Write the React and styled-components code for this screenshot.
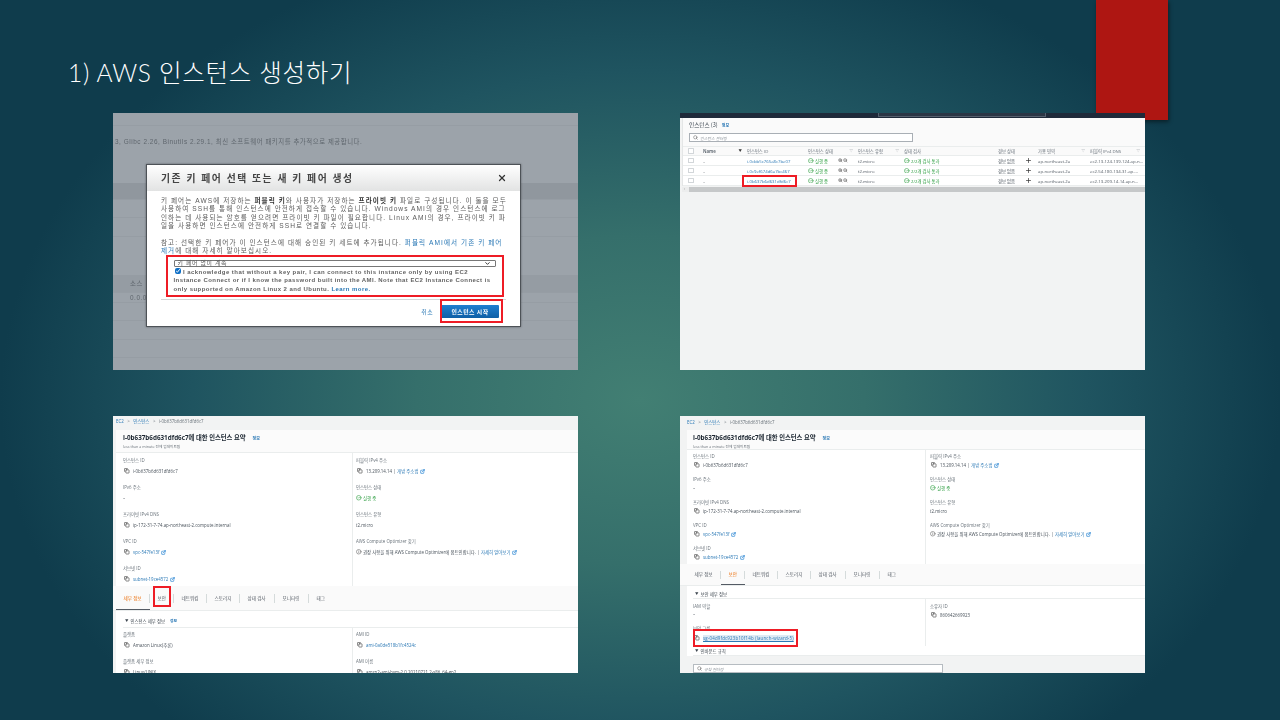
import React from 'react';
import styled, { createGlobalStyle } from 'styled-components';
import { Copy, ExternalLink, CircleCheck, Search, X, ChevronDown, Info, Plus, ZoomIn, ZoomOut } from 'lucide-react';

const GlobalStyle = createGlobalStyle`
  html, body { margin: 0; padding: 0; }
  body {
    width: 1280px;
    height: 720px;
    overflow: hidden;
    font-family: "Noto Sans CJK KR", sans-serif;
  }
`;

const CONSOLE_FONT = `"Open Sans", "Noto Sans CJK KR", sans-serif`;
const MODAL_FONT = `"Liberation Sans", "Noto Sans CJK KR", sans-serif`;
const RED = '#ee1c25';
const LINK = '#2a78b5';

// Slide frame
const Slide = styled.div`
  position: relative;
  width: 1280px;
  height: 720px;
  box-sizing: border-box;
  padding: 54px 0 0 68px;
  overflow: hidden;
  background: radial-gradient(ellipse 640px 470px at 640px 400px, #427f73 0%, #356f6b 35%, #1f5460 70%, #0f3c4c 100%);
`;

const Ribbon = styled.div`
  position: absolute;
  top: 0;
  left: 1096px;
  width: 72px;
  height: 120px;
  background: #ae1612;
  box-shadow: 1px 2px 4px rgba(0, 0, 0, 0.45);
`;

const Title = styled.h1`
  position: relative;
  margin: 0;
  height: 38px;
  line-height: 38px;
  font-family: "Lato", "Noto Sans CJK KR", sans-serif;
  font-size: 24.5px;
  font-weight: 300;
  letter-spacing: 0.7px;
  color: #ffffff;
`;

const ShotGrid = styled.div`
  position: relative;
  margin: 21px 0 0 45px;
  display: grid;
  grid-template-columns: 465px 465px;
  grid-auto-rows: 257px;
  column-gap: 102px;
  row-gap: 46px;
`;

const Shot = styled.div`
  position: relative;
  overflow: hidden;
  display: flex;
  flex-direction: column;
  background: ${(p) => p.$bg || '#f2f3f3'};
  filter: blur(0.35px);
  font-family: ${CONSOLE_FONT};
`;

// Red annotation frame drawn over the screenshot
const RedBox = styled.span`
  position: absolute;
  inset: ${(p) => p.$inset};
  border: 2px solid ${RED};
  pointer-events: none;
  z-index: 2;
`;

const Marked = styled.span`
  position: relative;
  display: inline-flex;
  align-items: center;
`;

// Shot 1 - key pair dialog over dimmed page
const DimRow = styled.div`
  height: ${(p) => p.$h}px;
  flex: none;
  box-sizing: border-box;
  padding-left: ${(p) => p.$pad || 2}px;
  line-height: ${(p) => p.$h}px;
  font-family: ${MODAL_FONT};
  font-size: 6.4px;
  letter-spacing: 0.55px;
  color: #5f666d;
  white-space: nowrap;
  background: ${(p) => p.$bg || 'transparent'};
  border-bottom: 1px solid ${(p) => p.$line || '#969da4'};
`;

const Modal = styled.div`
  position: absolute;
  left: 33px;
  top: 51px;
  width: 375px;
  height: 163px;
  box-sizing: border-box;
  background: #fff;
  border: 1px solid #4d5257;
  font-family: ${MODAL_FONT};
  box-shadow: 0 0 2px rgba(0, 0, 0, 0.4);
`;

const ModalHead = styled.div`
  height: 26px;
  box-sizing: border-box;
  padding: 0 14px;
  display: flex;
  align-items: center;
  justify-content: space-between;
  background: linear-gradient(#ffffff, #e2e3e3);
  color: #444;
  svg { width: 10px; height: 10px; stroke-width: 3; color: #333; margin-right: -1px; }
`;

const ModalTitle = styled.div`
  font-size: 9.8px;
  font-weight: 700;
  letter-spacing: 1.55px;
  white-space: nowrap;
`;

const ModalBody = styled.div`
  padding: 6px 14px 0;
  font-size: 6.6px;
  line-height: 8.3px;
  letter-spacing: 1.05px;
  color: #5a5a5a;
`;

const TextLine = styled.div`
  white-space: nowrap;
  b { color: #333; }
  a { color: ${LINK}; }
`;

const Note = styled.div`
  margin-top: 8.5px;
`;

const AckBlock = styled.div`
  position: relative;
  margin: 5px 0 0 12.5px;
  width: 322px;
`;

const FakeSelect = styled.div`
  height: 6.7px;
  box-sizing: border-box;
  padding: 0 3px;
  display: flex;
  align-items: center;
  justify-content: space-between;
  border: 1px solid #777;
  border-radius: 1px;
  font-size: 5.9px;
  letter-spacing: 0.68px;
  svg { width: 7px; height: 7px; stroke-width: 3; color: #222; margin-right: 1px; }
`;

const AckText = styled.div`
  margin-top: 1px;
  font-size: 6px;
  font-weight: 700;
  letter-spacing: 0.44px;
  color: #636363;
  white-space: nowrap;
  a { color: ${LINK}; }
`;

const AckBox = styled.input`
  width: 6px;
  height: 6px;
  margin: 0 2px 0 1.5px;
  vertical-align: -0.5px;
  accent-color: #0f6fc6;
`;

const ModalFoot = styled.div`
  margin: 6px 14px 0;
  padding-top: 5px;
  border-top: 1px solid #d5d7d8;
  display: flex;
  justify-content: flex-end;
  align-items: center;
  gap: 8px;
  padding-right: 7px;
  font-size: 5.9px;
  letter-spacing: 0.4px;
  color: ${LINK};
`;

const StartButton = styled.span`
  position: relative;
  width: 58px;
  height: 13.3px;
  display: flex;
  align-items: center;
  justify-content: center;
  background: linear-gradient(#1f7fd0, #0e5fa6);
  color: #fff;
  font-weight: 700;
  border-radius: 1px;
  white-space: nowrap;
`;

// Shot 2 - instances list
const TopBar = styled.div`
  height: 5px;
  flex: none;
  background: #1f2a3a;
  display: flex;
  justify-content: center;
`;

const TopSearch = styled.div`
  width: 166px;
  margin-left: 98px;
  height: 3px;
  border: 1px solid #55606e;
  border-top: 0;
  background: #2b3645;
`;

const ListPanel = styled.div`
  margin-left: 2px;
  background: #fff;
  border-left: 1px solid #e4e6e6;
`;

const ListHead = styled.div`
  height: 28px;
  box-sizing: border-box;
  padding: 3px 0 0 6px;
  background: #fafafa;
`;

const ListTitle = styled.div`
  font-family: "Noto Sans CJK KR", sans-serif;
  font-size: 5.6px;
  line-height: 9px;
  color: #3c4650;
  span { margin-left: 4px; color: ${LINK}; font-size: 4px; font-weight: 700; }
`;

const SearchBox = styled.div`
  width: 224px;
  height: 9px;
  margin-top: 3px;
  box-sizing: border-box;
  padding-left: 3px;
  display: flex;
  align-items: center;
  gap: 2px;
  background: #fff;
  border: 1px solid #a9afb5;
  font-size: 4px;
  font-style: italic;
  color: #8a9299;
  svg { width: 5px; height: 5px; color: #444; }
`;

const Cols = styled.div`
  display: grid;
  box-sizing: border-box;
  grid-template-columns: 15px 44px 61px 30px 20px 46px 94px 27px 13px 52px 1fr;
  padding-left: 5px;
  align-items: center;
  height: 10px;
  font-size: 4.3px;
  color: #4e5760;
  white-space: nowrap;
  background: ${(p) => (p.$head ? '#fafafa' : '#fff')};
  border-bottom: 1px solid #eaeded;
  ${(p) => p.$head && 'border-top: 1px solid #eaeded; color: #68717a;'}
`;

const HeadCell = styled.div`
  grid-column: span ${(p) => p.$span || 1};
  display: flex;
  justify-content: space-between;
  padding-right: 5px;
  font-weight: ${(p) => (p.$strong ? 700 : 400)};
  i { font-style: normal; font-size: 3.4px; color: ${(p) => (p.$strong ? '#333' : '#8a9299')}; }
`;

const Tick = styled.span`
  display: block;
  width: 3.6px;
  height: 3.6px;
  border: 0.6px solid #d2d6d9;
  border-radius: 0.6px;
  background: #fff;
`;

const Cell = styled.div`
  min-width: 0;
  overflow: hidden;
  text-overflow: ellipsis;
  color: ${(p) => p.$color || 'inherit'};
`;

const ZoomCell = styled.div`
  display: flex;
  gap: 0.5px;
  svg { width: 4.6px; height: 4.6px; color: #555; stroke-width: 2.5; }
`;

const PlusCell = styled.div`
  display: flex;
  svg { width: 7px; height: 7px; color: #333; stroke-width: 2.4; }
`;

const GreenText = styled.span`
  display: inline-flex;
  align-items: center;
  gap: 1.5px;
  color: #2a9c3e;
  svg { width: 5.5px; height: 5.5px; stroke-width: 2.5; flex: none; }
`;

const ScrollBar = styled.div`
  flex: none;
  margin: 1px 0 0 2px;
  height: 5px;
  display: flex;
  background: #c6c8c9;
  span { width: 7px; background: #eceded; font-size: 3px; line-height: 5px; padding-left: 2px; box-sizing: border-box; color: #666; }
`;

// Shots 3 and 4 - instance summary
const Crumbs = styled.div`
  flex: none;
  height: 14px;
  box-sizing: border-box;
  padding: ${(p) => p.$top}px 0 0 ${(p) => p.$left}px;
  display: flex;
  gap: 3.5px;
  font-size: 4.4px;
  line-height: 8px;
  color: ${LINK};
  white-space: nowrap;
  span { color: #69727a; }
`;

const SummaryCard = styled.div`
  flex: none;
  margin-left: ${(p) => p.$gutter}px;
  background: #fff;
  display: flex;
  flex-direction: column;
`;

const SummaryHead = styled.div`
  height: ${(p) => p.$h}px;
  box-sizing: border-box;
  padding: 3px 0 0 ${(p) => p.$pad}px;
  background: #fbfbfb;
  border-bottom: 1px solid #eaeded;
`;

const SummaryTitle = styled.div`
  font-size: 6.3px;
  line-height: 10px;
  font-weight: 700;
  color: #1b2530;
  white-space: nowrap;
  span { margin-left: 7px; font-size: 4px; color: ${LINK}; font-weight: 700; }
`;

const SummarySub = styled.div`
  font-size: 3.7px;
  line-height: 5px;
  color: #687078;
  white-space: nowrap;
`;

const TwoCols = styled.div`
  display: grid;
  grid-template-columns: ${(p) => p.$left}px 1fr;
  height: ${(p) => p.$h}px;
  box-sizing: border-box;
`;

const FieldCol = styled.div`
  padding: ${(p) => p.$top}px 0 0 ${(p) => p.$pad}px;
  border-left: ${(p) => (p.$rule ? '1px solid #eaeded' : '0')};
`;

const FieldBox = styled.div`
  height: ${(p) => p.$pitch}px;
`;

const FieldLabel = styled.div`
  font-size: 4.4px;
  line-height: 8px;
  color: #69727a;
  white-space: nowrap;
`;

const FieldValue = styled.div`
  display: flex;
  align-items: center;
  gap: 1.5px;
  height: 8px;
  margin-top: ${(p) => p.$gap}px;
  font-size: 4.4px;
  color: #49525b;
  white-space: nowrap;
  a { color: ${LINK}; }
`;

const CopyIcon = styled(Copy)`
  width: 5.5px;
  height: 5.5px;
  margin: 0 2px 0 1px;
  color: #333;
  stroke-width: 2.5;
  flex: none;
`;

const LinkIcon = styled(ExternalLink)`
  width: 5px;
  height: 5px;
  color: #1f7fd0;
  stroke-width: 3;
  flex: none;
`;

const InfoIcon = styled(Info)`
  width: 5.5px;
  height: 5.5px;
  color: #444;
  flex: none;
`;

const SecurityLink = styled.a`
  letter-spacing: 0.2px;
  text-decoration: underline;
  background: #dfeaf4;
`;

const TabBar = styled.div`
  flex: none;
  height: ${(p) => p.$h}px;
  box-sizing: border-box;
  padding-left: ${(p) => p.$pad}px;
  display: flex;
  background: #fafafa;
  border-bottom: 1px solid #eaeded;
`;

const Tab = styled.div`
  position: relative;
  box-sizing: border-box;
  width: ${(p) => p.$w}px;
  padding-left: 7.5px;
  display: flex;
  align-items: center;
  font-size: 4.6px;
  color: ${(p) => (p.$active ? '#ec7211' : '#545b64')};
  white-space: nowrap;
  border-bottom: 1px solid ${(p) => (p.$active ? '#545b64' : 'transparent')};
  &:not(:last-child)::after {
    content: '';
    position: absolute;
    right: 0;
    top: 33%;
    height: 40%;
    border-right: 1px solid #d5dbdb;
  }
`;

const SectionHead = styled.div`
  height: ${(p) => p.$h}px;
  margin-left: ${(p) => p.$pad}px;
  box-sizing: border-box;
  padding-left: 2px;
  display: flex;
  align-items: flex-end;
  padding-bottom: ${(p) => p.$bottom}px;
  gap: 2px;
  font-size: 4.4px;
  line-height: 8px;
  color: #3d464f;
  white-space: nowrap;
  border-bottom: 1px solid #eaeded;
  i { font-style: normal; font-size: 3.5px; }
  span { color: ${LINK}; font-weight: 700; font-size: 3.8px; margin-left: 3px; }
`;

const RuleSearch = styled(SearchBox)`
  width: 250px;
  margin: 8px 0 0 13px;
  border-color: #b6bcc1;
`;

const Field = ({ label, gap, pitch, children }) => (
  <FieldBox $pitch={pitch}>
    <FieldLabel>{label}</FieldLabel>
    <FieldValue $gap={gap}>{children}</FieldValue>
  </FieldBox>
);

const instances = [
  { id: 'i-0cbb5c765a8c7be07', dns: 'ec2-13-124-139-124.ap-n...' },
  { id: 'i-0c9ef674d6a7bc467', dns: 'ec2-54-180-134-31.ap-...' },
  { id: 'i-0b637b6d631dfd6c7', dns: 'ec2-13-209-14-14.ap-n...', marked: true },
];

const tabNames = ['세부 정보', '보안', '네트워킹', '스토리지', '상태 검사', '모니터링', '태그'];
const tabWidths = [34, 24, 33, 33, 35, 34, 30];

const INSTANCE_ID = 'i-0b637b6d631dfd6c7';

// Upper half shared by both summary screenshots
const SummaryFields = ({ leftW, h, pad, top, gap, pitch, rightPad }) => (
  <TwoCols $left={leftW} $h={h}>
    <FieldCol $pad={pad} $top={top}>
      <Field label="인스턴스 ID" gap={gap} pitch={pitch}><CopyIcon />{INSTANCE_ID}</Field>
      <Field label="IPv6 주소" gap={gap} pitch={pitch}>–</Field>
      <Field label="프라이빗 IPv4 DNS" gap={gap} pitch={pitch}><CopyIcon />ip-172-31-7-74.ap-northeast-2.compute.internal</Field>
      <Field label="VPC ID" gap={gap} pitch={pitch}><CopyIcon /><a>vpc-547fe13f</a><LinkIcon /></Field>
      <Field label="서브넷 ID" gap={gap} pitch={pitch}><CopyIcon /><a>subnet-19ce4572</a><LinkIcon /></Field>
    </FieldCol>
    <FieldCol $pad={rightPad} $top={top} $rule>
      <Field label="퍼블릭 IPv4 주소" gap={gap} pitch={pitch}><CopyIcon />13.209.14.14 | <a>개방 주소법</a><LinkIcon /></Field>
      <Field label="인스턴스 상태" gap={gap} pitch={pitch}><GreenText><CircleCheck />실행 중</GreenText></Field>
      <Field label="인스턴스 유형" gap={gap} pitch={pitch}>t2.micro</Field>
      <Field label="AWS Compute Optimizer 찾기" gap={gap} pitch={pitch}>
        <InfoIcon />권장 사항을 위해 AWS Compute Optimizer에 옵트인합니다. | <a>자세히 알아보기</a><LinkIcon />
      </Field>
    </FieldCol>
  </TwoCols>
);

const Tabs = ({ active, h, pad, marked }) => (
  <TabBar $h={h} $pad={pad}>
    {tabNames.map((name, i) => (
      <Tab key={name} $w={tabWidths[i]} $active={i === active}>
        {name}
        {i === marked && <RedBox $inset="0 3px 2px 3px" />}
      </Tab>
    ))}
  </TabBar>
);

const KeyPairShot = () => (
  <Shot $bg="#9ca3aa">
    <DimRow $h={13} />
    <DimRow $h={32} $line="transparent">3, Glibc 2.26, Binutils 2.29.1, 최신 소프트웨어 패키지를 추가적으로 제공합니다.</DimRow>
    <DimRow $h={25} $line="transparent" />
    <DimRow $h={17} $bg="#90979e" />
    <DimRow $h={18} />
    <DimRow $h={19} />
    <DimRow $h={38} $line="transparent" />
    <DimRow $h={18} $bg="#959ca3" $pad={17}>소스</DimRow>
    <DimRow $h={10} $pad={17}>0.0.0</DimRow>
    <DimRow $h={18} />
    <DimRow $h={19} />
    <DimRow $h={18} />

    <Modal>
      <ModalHead>
        <ModalTitle>기존 키 페어 선택 또는 새 키 페어 생성</ModalTitle>
        <X />
      </ModalHead>
      <ModalBody>
        <TextLine>키 페어는 AWS에 저장하는 <b>퍼블릭 키</b>와 사용자가 저장하는 <b>프라이빗 키</b> 파일로 구성됩니다. 이 둘을 모두</TextLine>
        <TextLine>사용하여 SSH를 통해 인스턴스에 안전하게 접속할 수 있습니다. Windows AMI의 경우 인스턴스에 로그</TextLine>
        <TextLine>인하는 데 사용되는 암호를 얻으려면 프라이빗 키 파일이 필요합니다. Linux AMI의 경우, 프라이빗 키 파</TextLine>
        <TextLine>일을 사용하면 인스턴스에 안전하게 SSH로 연결할 수 있습니다.</TextLine>
        <Note>
          <TextLine>참고: 선택한 키 페어가 이 인스턴스에 대해 승인된 키 세트에 추가됩니다. <a>퍼블릭 AMI에서 기존 키 페어</a></TextLine>
          <TextLine><a>제거</a>에 대해 자세히 알아보십시오.</TextLine>
        </Note>
        <AckBlock>
          <RedBox $inset="-5px -8px -4px -8px" />
          <FakeSelect>키 페어 없이 계속<ChevronDown /></FakeSelect>
          <AckText>
            <div><AckBox type="checkbox" checked readOnly />I acknowledge that without a key pair, I can connect to this instance only by using EC2</div>
            <div>Instance Connect or if I know the password built into the AMI. Note that EC2 Instance Connect is</div>
            <div>only supported on Amazon Linux 2 and Ubuntu. <a>Learn more.</a></div>
          </AckText>
        </AckBlock>
      </ModalBody>
      <ModalFoot>
        <span>취소</span>
        <StartButton>
          인스턴스 시작
          <RedBox $inset="-6px -4px -5px -1px" />
        </StartButton>
      </ModalFoot>
    </Modal>
  </Shot>
);

const InstanceListShot = () => (
  <Shot>
    <TopBar><TopSearch /></TopBar>
    <ListPanel>
      <ListHead>
        <ListTitle>인스턴스 (3)<span>정보</span></ListTitle>
        <SearchBox><Search />인스턴스 필터링</SearchBox>
      </ListHead>
      <Cols $head>
        <Tick />
        <HeadCell $strong>Name<i>▼</i></HeadCell>
        <HeadCell>인스턴스 ID</HeadCell>
        <HeadCell $span={2}>인스턴스 상태<i>▽</i></HeadCell>
        <HeadCell>인스턴스 유형<i>▽</i></HeadCell>
        <HeadCell>상태 검사</HeadCell>
        <HeadCell $span={2}>경보 상태</HeadCell>
        <HeadCell>가용 영역<i>▽</i></HeadCell>
        <HeadCell>퍼블릭 IPv4 DNS<i>▽</i></HeadCell>
      </Cols>
      {instances.map((row) => (
        <Cols key={row.id}>
          <Tick />
          <Cell>–</Cell>
          <div>
            {row.marked ? (
              <Marked>
                <Cell $color={LINK}>{row.id}</Cell>
                <RedBox $inset="-3px -6px -3px -5px" />
              </Marked>
            ) : (
              <Cell $color={LINK}>{row.id}</Cell>
            )}
          </div>
          <GreenText><CircleCheck />실행 중</GreenText>
          <ZoomCell><ZoomIn /><ZoomOut /></ZoomCell>
          <Cell>t2.micro</Cell>
          <GreenText><CircleCheck />2/2개 검사 통과</GreenText>
          <Cell>경보 없음</Cell>
          <PlusCell><Plus /></PlusCell>
          <Cell>ap-northeast-2a</Cell>
          <Cell>{row.dns}</Cell>
        </Cols>
      ))}
    </ListPanel>
    <ScrollBar><span>‹</span></ScrollBar>
  </Shot>
);

const DetailsShot = () => (
  <Shot>
    <Crumbs $top={1} $left={3}>EC2 <span>&gt;</span> 인스턴스 <span>&gt;</span> <span>{INSTANCE_ID}</span></Crumbs>
    <SummaryCard $gutter={3}>
      <SummaryHead $h={23} $pad={7}>
        <SummaryTitle>{INSTANCE_ID}에 대한 인스턴스 요약<span>정보</span></SummaryTitle>
        <SummarySub>less than a minute 전에 업데이트됨</SummarySub>
      </SummaryHead>
      <SummaryFields leftW={236} h={133} pad={7} top={3} gap={3} pitch={27} rightPad={3} />
    </SummaryCard>
    <Tabs active={0} h={25} pad={3} marked={1} />
    <SummaryCard $gutter={3}>
      <SectionHead $h={17} $pad={7} $bottom={2}><i>▼</i>인스턴스 세부 정보<span>정보</span></SectionHead>
      <TwoCols $left={236} $h={60}>
        <FieldCol $pad={7} $top={2}>
          <Field label="플랫폼" gap={3} pitch={27}><CopyIcon />Amazon Linux(추론)</Field>
          <Field label="플랫폼 세부 정보" gap={3} pitch={27}><CopyIcon />Linux/UNIX</Field>
        </FieldCol>
        <FieldCol $pad={3} $top={2} $rule>
          <Field label="AMI ID" gap={3} pitch={27}><CopyIcon /><a>ami-0a0de518b1fc4524c</a></Field>
          <Field label="AMI 이름" gap={3} pitch={27}><CopyIcon />amzn2-ami-hvm-2.0.20210721.2-x86_64-gp2</Field>
        </FieldCol>
      </TwoCols>
    </SummaryCard>
  </Shot>
);

const SecurityShot = () => (
  <Shot>
    <Crumbs $top={2} $left={7}>EC2 <span>&gt;</span> 인스턴스 <span>&gt;</span> <span>{INSTANCE_ID}</span></Crumbs>
    <SummaryCard $gutter={7}>
      <SummaryHead $h={20} $pad={6}>
        <SummaryTitle>{INSTANCE_ID}에 대한 인스턴스 요약<span>정보</span></SummaryTitle>
        <SummarySub>less than a minute 전에 업데이트됨</SummarySub>
      </SummaryHead>
      <SummaryFields leftW={238} h={114} pad={6} top={2} gap={1} pitch={23} rightPad={4} />
    </SummaryCard>
    <Tabs active={1} h={22} pad={7} />
    <SummaryCard $gutter={7}>
      <SectionHead $h={13} $pad={6} $bottom={0}><i>▼</i>보안 세부 정보</SectionHead>
      <TwoCols $left={238} $h={46}>
        <FieldCol $pad={6} $top={3}>
          <Field label="IAM 역할" gap={0} pitch={22}>–</Field>
          <Field label="보안 그룹" gap={2} pitch={22}>
            <CopyIcon />
            <Marked>
              <SecurityLink>sg-04d9fdc923b10f14b (launch-wizard-5)</SecurityLink>
              <RedBox $inset="-6px -4px -6px -10px" />
            </Marked>
          </Field>
        </FieldCol>
        <FieldCol $pad={4} $top={3} $rule>
          <Field label="소유자 ID" gap={1} pitch={22}><CopyIcon />860642669923</Field>
        </FieldCol>
      </TwoCols>
      <SectionHead $h={11} $pad={6} $bottom={0}><i>▼</i>인바운드 규칙</SectionHead>
    </SummaryCard>
    <RuleSearch><Search />규칙 필터링</RuleSearch>
  </Shot>
);

const App = () => (
  <Slide>
    <GlobalStyle />
    <Ribbon />
    <Title>1) AWS 인스턴스 생성하기</Title>
    <ShotGrid>
      <KeyPairShot />
      <InstanceListShot />
      <DetailsShot />
      <SecurityShot />
    </ShotGrid>
  </Slide>
);

export default App;
